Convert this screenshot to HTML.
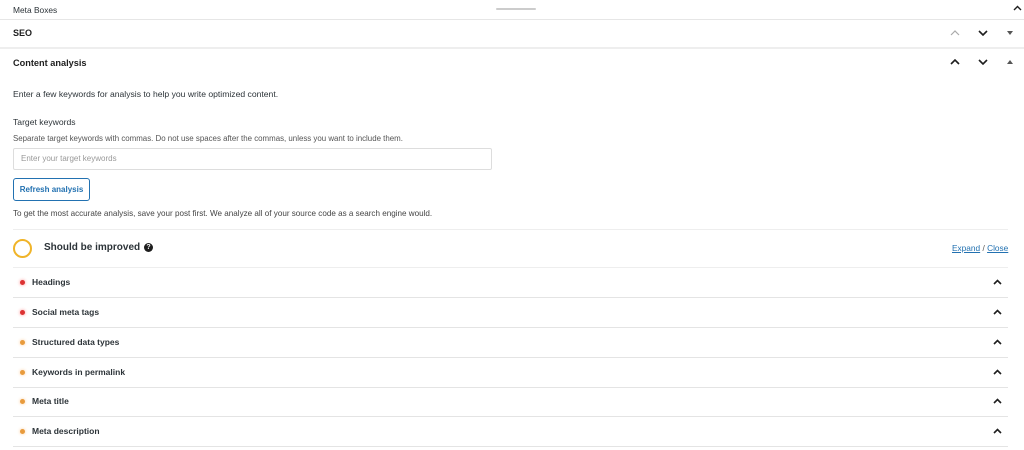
<!DOCTYPE html>
<html><head><meta charset="utf-8"><style>
*{margin:0;padding:0;box-sizing:border-box}
body{width:1024px;height:450px;background:#fff;font-family:"Liberation Sans",sans-serif;color:#1e1e1e;position:relative;overflow:hidden}
.a{position:absolute}
.t{font-size:8.6px;color:#2c3338}
.hl{position:absolute;height:1px;background:#e6e6e6}
.row{position:absolute;left:13px;width:995px;height:30px;border-bottom:1px solid #e4e4e4}
.row .d{position:absolute;left:7px;top:12px;width:5px;height:5px;border-radius:50%}
.row .l{position:absolute;left:19px;top:9px;font-size:8.5px;font-weight:bold;color:#2c3338}
.row svg{position:absolute;left:980px;top:11px}
</style></head><body>
<div class="a t" style="left:13px;top:5px;font-size:8.4px">Meta Boxes</div>
<div class="a" style="left:496px;top:8px;width:40px;height:2px;background:#ccc;border-radius:1px"></div>
<svg class="a" style="left:1013px;top:5px" width="9" height="6" viewBox="0 0 9 6"><path d="M1 5L4.5 1.5L8 5" fill="none" stroke="#1e1e1e" stroke-width="1.4"/></svg>
<div class="hl" style="left:0;top:19px;width:1024px"></div>
<div class="a" style="left:13px;top:28px;font-size:9px;font-weight:bold">SEO</div>
<svg class="a" style="left:950px;top:30px" width="10" height="6" viewBox="0 0 10 6"><path d="M1 5L5 1L9 5" fill="none" stroke="#aaa" stroke-width="1.2"/></svg>
<svg class="a" style="left:978px;top:30px" width="10" height="6" viewBox="0 0 10 6"><path d="M1 1L5 5L9 1" fill="none" stroke="#1e1e1e" stroke-width="1.6"/></svg>
<svg class="a" style="left:1007px;top:31px" width="6" height="4" viewBox="0 0 6 4"><path d="M0 0H6L3 4Z" fill="#555"/></svg>
<div class="hl" style="left:0;top:47px;width:1024px;height:2px;background:#eee"></div>
<div class="a" style="left:13px;top:58px;font-size:9.2px;font-weight:bold">Content analysis</div>
<svg class="a" style="left:950px;top:59px" width="10" height="6" viewBox="0 0 10 6"><path d="M1 5L5 1L9 5" fill="none" stroke="#1e1e1e" stroke-width="1.6"/></svg>
<svg class="a" style="left:978px;top:59px" width="10" height="6" viewBox="0 0 10 6"><path d="M1 1L5 5L9 1" fill="none" stroke="#1e1e1e" stroke-width="1.6"/></svg>
<svg class="a" style="left:1007px;top:60px" width="6" height="4" viewBox="0 0 6 4"><path d="M0 4H6L3 0Z" fill="#555"/></svg>
<div class="a t" style="left:13px;top:89px">Enter a few keywords for analysis to help you write optimized content.</div>
<div class="a t" style="left:13px;top:117px">Target keywords</div>
<div class="a t" style="left:13px;top:134px;font-size:7.9px;color:#555">Separate target keywords with commas. Do not use spaces after the commas, unless you want to include them.</div>
<div class="a" style="left:13px;top:148px;width:479px;height:22px;border:1px solid #ddd;border-radius:2px"></div>
<div class="a" style="left:21px;top:154px;font-size:8px;color:#999">Enter your target keywords</div>
<div class="a" style="left:13px;top:178px;width:77px;height:23px;border:1px solid #2271b1;border-radius:3px;color:#2271b1;font-size:8px;font-weight:bold;text-align:center;line-height:21px">Refresh analysis</div>
<div class="a t" style="left:13px;top:209px;font-size:8.1px;color:#444">To get the most accurate analysis, save your post first. We analyze all of your source code as a search engine would.</div>
<div class="hl" style="left:13px;top:229px;width:995px;background:#eee"></div>
<div class="a" style="left:13px;top:239px;width:19px;height:19px;border:2px solid #f0b429;border-radius:50%"></div>
<div class="a" style="left:44px;top:242px;font-size:10px;font-weight:bold;color:#2c3338">Should be improved</div>
<div class="a" style="left:144px;top:243px;width:9px;height:9px;border-radius:50%;background:#1e1e1e;color:#fff;font-size:7px;font-weight:bold;text-align:center;line-height:9px">?</div>
<div class="a" style="left:952px;top:243px;font-size:8.3px;color:#2271b1"><u>Expand</u> <span style="color:#555">/</span> <u>Close</u></div>
<div class="hl" style="left:13px;top:267px;width:995px;background:#eee"></div>
<div class="row" style="top:268px"><div class="d" style="background:#dc3232;box-shadow:0 0 3px #f88"></div><div class="l">Headings</div><svg width="9" height="6" viewBox="0 0 9 6"><path d="M1 5L4.5 1.5L8 5" fill="none" stroke="#1e1e1e" stroke-width="1.6"/></svg></div>
<div class="row" style="top:298px"><div class="d" style="background:#dc3232;box-shadow:0 0 3px #f88"></div><div class="l">Social meta tags</div><svg width="9" height="6" viewBox="0 0 9 6"><path d="M1 5L4.5 1.5L8 5" fill="none" stroke="#1e1e1e" stroke-width="1.6"/></svg></div>
<div class="row" style="top:328px"><div class="d" style="background:#e89b3c;box-shadow:0 0 3px #fc9"></div><div class="l">Structured data types</div><svg width="9" height="6" viewBox="0 0 9 6"><path d="M1 5L4.5 1.5L8 5" fill="none" stroke="#1e1e1e" stroke-width="1.6"/></svg></div>
<div class="row" style="top:358px"><div class="d" style="background:#e89b3c;box-shadow:0 0 3px #fc9"></div><div class="l">Keywords in permalink</div><svg width="9" height="6" viewBox="0 0 9 6"><path d="M1 5L4.5 1.5L8 5" fill="none" stroke="#1e1e1e" stroke-width="1.6"/></svg></div>
<div class="row" style="top:387px"><div class="d" style="background:#e89b3c;box-shadow:0 0 3px #fc9"></div><div class="l">Meta title</div><svg width="9" height="6" viewBox="0 0 9 6"><path d="M1 5L4.5 1.5L8 5" fill="none" stroke="#1e1e1e" stroke-width="1.6"/></svg></div>
<div class="row" style="top:417px"><div class="d" style="background:#e89b3c;box-shadow:0 0 3px #fc9"></div><div class="l">Meta description</div><svg width="9" height="6" viewBox="0 0 9 6"><path d="M1 5L4.5 1.5L8 5" fill="none" stroke="#1e1e1e" stroke-width="1.6"/></svg></div>
</body></html>
